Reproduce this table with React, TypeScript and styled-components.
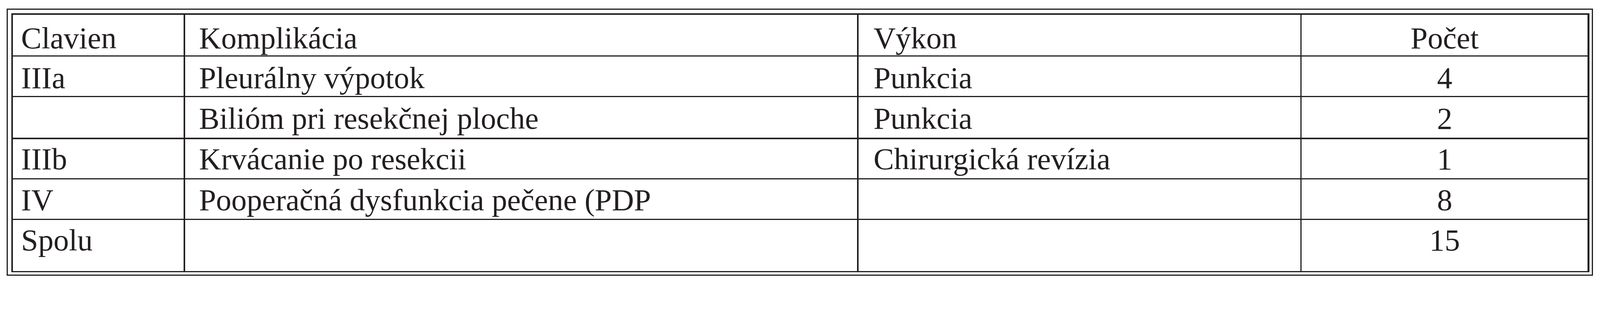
import { Fragment } from 'react';
import styled, { createGlobalStyle } from 'styled-components';

const INK = '#231f20';

// sizes are taken off a 4488px wide page; keep them relative to the viewport
const u = (n: number) => `${((n * 100) / 4488).toFixed(4)}vw`;

const GlobalStyle = createGlobalStyle`
  html, body {
    margin: 0;
    padding: 0;
    background: #ffffff;
    overflow: hidden;
  }
`;

const Page = styled.div`
  padding: ${u(24)} 0 0 ${u(19)};
  font-family: 'Liberation Serif', 'Times New Roman', serif;
  color: ${INK};
`;

const Frame = styled.div`
  width: ${u(4449)};
  box-sizing: border-box;
  border: ${u(4)} solid ${INK};
  padding: ${u(10)} ${u(6)} ${u(6)} ${u(10)};
  background: #ffffff;
`;

const Grid = styled.div`
  display: grid;
  grid-template-columns: ${u(479)} ${u(1885)} ${u(1239)} ${u(802)};
  gap: ${u(4)};
  padding: ${u(4)};
  background: ${INK};
`;

const Cell = styled.div<{ $height: number; $top: number; $center?: boolean; $indent: number }>`
  background: #ffffff;
  box-sizing: border-box;
  height: ${({ $height }) => u($height)};
  padding-top: ${({ $top }) => u($top)};
  padding-left: ${({ $center, $indent }) => ($center ? 0 : u($indent))};
  text-align: ${({ $center }) => ($center ? 'center' : 'left')};
  font-size: ${u(86)};
  line-height: ${u(86)};
  white-space: nowrap;
  overflow: hidden;
`;

type Row = {
  clavien: string;
  komplikacia: string;
  vykon: string;
  pocet: string;
  height: number;
  top: number;
};

const rows: Row[] = [
  { clavien: 'Clavien', komplikacia: 'Komplikácia', vykon: 'Výkon', pocet: 'Počet', height: 114, top: 23 },
  { clavien: 'IIIa', komplikacia: 'Pleurálny výpotok', vykon: 'Punkcia', pocet: '4', height: 110, top: 17 },
  { clavien: '', komplikacia: 'Bilióm pri resekčnej ploche', vykon: 'Punkcia', pocet: '2', height: 114, top: 17 },
  { clavien: 'IIIb', komplikacia: 'Krvácanie po resekcii', vykon: 'Chirurgická revízia', pocet: '1', height: 109, top: 13 },
  { clavien: 'IV', komplikacia: 'Pooperačná dysfunkcia pečene (PDP', vykon: '', pocet: '8', height: 110, top: 15 },
  { clavien: 'Spolu', komplikacia: '', vykon: '', pocet: '15', height: 143, top: 14 },
];

const App = () => (
  <>
    <GlobalStyle />
    <Page>
      <Frame>
        <Grid>
          {rows.map((r, i) => (
            <Fragment key={i}>
              <Cell $height={r.height} $top={r.top} $indent={23}>{r.clavien}</Cell>
              <Cell $height={r.height} $top={r.top} $indent={39}>{r.komplikacia}</Cell>
              <Cell $height={r.height} $top={r.top} $indent={42}>{r.vykon}</Cell>
              <Cell $height={r.height} $top={r.top} $indent={0} $center>{r.pocet}</Cell>
            </Fragment>
          ))}
        </Grid>
      </Frame>
    </Page>
  </>
);

export default App;
